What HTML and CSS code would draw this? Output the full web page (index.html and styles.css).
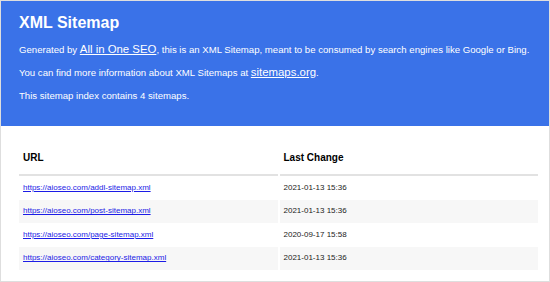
FILE: index.html
```html
<!DOCTYPE html>
<html lang="en">
    <head>
        <meta charset="UTF-8">
        <title>XML Sitemap</title>
        <link rel="stylesheet" href="styles.css">
    </head>
    <body>
        <div class="page">
            <div class="header">
                <h1>XML Sitemap</h1>
                <div class="intro">
                    <p>Generated by <a href="#" class="bigLink">All in One SEO</a>, this is an XML Sitemap, meant to be consumed by search engines like Google or Bing.</p>
                    <p>You can find more information about XML Sitemaps at <a href="#" class="bigLink">sitemaps.org</a>.</p>
                    <p>This sitemap index contains 4 sitemaps.</p>
                </div>
            </div>
            <table class="sitemapTable">
                <thead>
                    <tr>
                        <th>URL</th>
                        <th>Last Change</th>
                    </tr>
                </thead>
                <tbody>
                    <tr>
                        <td><a href="#">https://aioseo.com/addl-sitemap.xml</a></td>
                        <td>2021-01-13 15:36</td>
                    </tr>
                    <tr>
                        <td><a href="#">https://aioseo.com/post-sitemap.xml</a></td>
                        <td>2021-01-13 15:36</td>
                    </tr>
                    <tr>
                        <td><a href="#">https://aioseo.com/page-sitemap.xml</a></td>
                        <td>2020-09-17 15:58</td>
                    </tr>
                    <tr>
                        <td><a href="#">https://aioseo.com/category-sitemap.xml</a></td>
                        <td>2021-01-13 15:36</td>
                    </tr>
                </tbody>
            </table>
        </div>
    </body>
</html>
```

FILE: styles.css
```css
body {
    margin: 0;
    font-family: "Liberation Sans", Arial, sans-serif;
    background-color: #fff;
}
.page {
    width: 548px;
    height: 280px;
    border: 1px solid #dedede;
    overflow: hidden;
}
.header {
    background-color: #3a72e8;
    color: #fff;
    padding: 12px 14px 19px 18px;
}
h1 {
    margin: 0;
    font-size: 16px;
    line-height: 20px;
    font-weight: bold;
}
.intro {
    margin-top: 5px;
}
.intro p {
    margin: 0;
    font-size: 9.6px;
    line-height: 23px;
    white-space: nowrap;
}
.bigLink {
    color: #fff;
    font-size: 11.4px;
}
.sitemapTable {
    width: 523px;
    margin: 16px 0 0 16px;
    border-spacing: 2px 0;
}
.sitemapTable th {
    width: 50%;
    text-align: left;
    font-size: 10px;
    line-height: 12px;
    padding: 10px 4px;
    border-bottom: 2px solid #e2e2e2;
    color: #000;
}
.sitemapTable td {
    font-size: 8px;
    line-height: 12px;
    padding: 5.75px 4px;
    color: #222;
}
.sitemapTable tbody tr:nth-child(even) td {
    background-color: #f7f7f7;
}
.sitemapTable td a {
    color: #1c1ce6;
}
```
